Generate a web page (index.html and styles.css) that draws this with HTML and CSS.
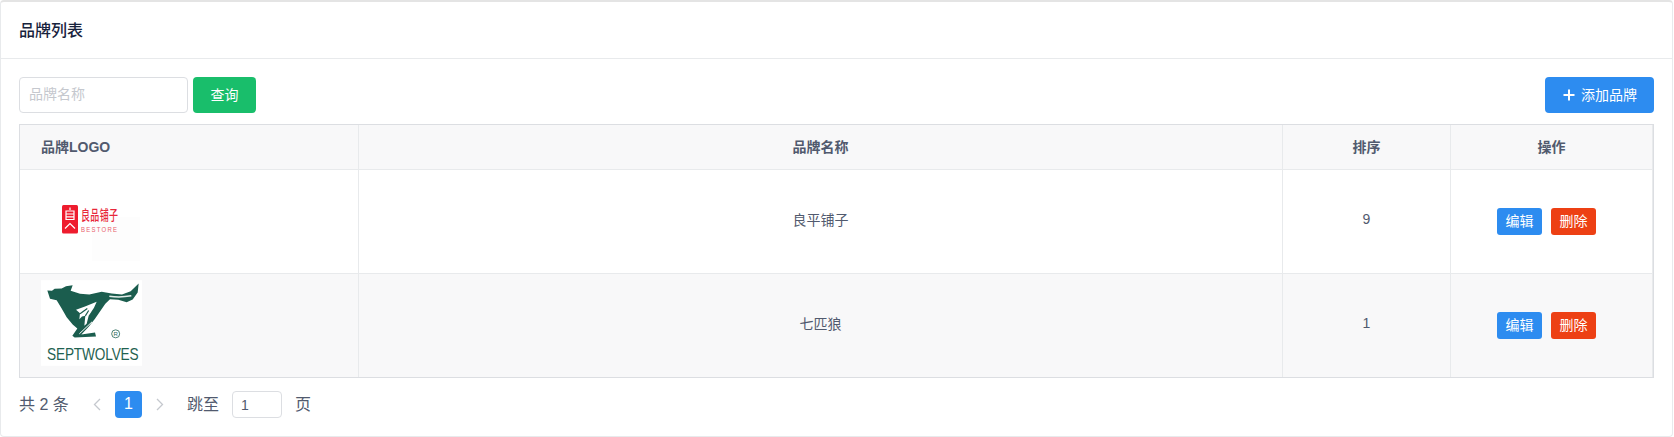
FILE: index.html
```html
<!DOCTYPE html>
<html lang="zh">
<head>
<meta charset="utf-8">
<title>品牌列表</title>
<link rel="stylesheet" href="styles.css">
</head>
<body>
<div class="card">
  <div class="card-head">品牌列表</div>
  <div class="card-body">
    <div class="toolbar">
      <div class="search">
        <input class="search-input" type="text" placeholder="品牌名称">
        <button class="btn btn-green btn-query">查询</button>
      </div>
      <button class="btn btn-blue btn-add">
        <svg class="plus" width="12" height="12" viewBox="0 0 12 12"><path d="M6 0.5V11.5M0.5 6H11.5" stroke="#fff" stroke-width="2" fill="none"/></svg>
        <span>添加品牌</span>
      </button>
    </div>
    <div class="table-wrap">
      <table class="table">
        <colgroup><col class="c1"><col class="c2"><col class="c3"><col class="c4"></colgroup>
        <thead>
          <tr><th class="left">品牌LOGO</th><th>品牌名称</th><th>排序</th><th>操作</th></tr>
        </thead>
        <tbody>
          <tr>
            <td class="left logo-cell">
              <svg class="logo" width="101" height="86" viewBox="0 0 101 86">
                <rect x="51" y="38" width="48" height="44" fill="#fdfdfd"/>
                <rect x="21" y="26" width="16" height="28.500" rx="1.500" fill="#ee1c2e"/>
                <path d="M29 28.500V31M25 32H33V40.500H25ZM25 35H33M25 37.800H33M24 49.500L29 44.500L34 49.500" stroke="#fff" stroke-width="1.200" fill="none"/>
                <text transform="translate(40 41) scale(1 1.500)" class="logo-cn" textLength="37">良品铺子</text>
                <text transform="translate(40 52.500) scale(1 1.300)" class="logo-en" textLength="36">BESTORE</text>
              </svg>
            </td>
            <td class="txt">良平铺子</td>
            <td class="txt">9</td>
            <td><div class="ops"><button class="btn-sm btn-blue">编辑</button><button class="btn-sm btn-red">删除</button></div></td>
          </tr>
          <tr class="stripe">
            <td class="left logo-cell wolf-cell">
              <svg class="logo" width="101" height="86" viewBox="33 15 303 257">
                <rect x="33" y="15" width="303" height="257" fill="#fff"/>
                <path class="wolf" d="M52 46L66 47L74 41L95 40L108 33L128 30L122 47L150 56L178 58L215 50L245 55L276 58L302 48L326 25L323 52L308 73L290 81L265 74L240 72L226 86L212 106L195 131L176 155L154 178L195 172L198 184L134 187L127 182L142 160L128 148L110 126L95 100L80 75L60 71Z"/>
                <path d="M238 63Q268 68 304 62" stroke="#e4eeea" stroke-width="4.500" fill="none"/>
                <path fill="#fff" d="M138 104L165 94L200 80L192 98L176 122L170 146L163 152L166 122L156 124L148 132L150 114Z"/>
                <path d="M150 116L172 100M166 122L176 106" stroke="#1b5d4e" stroke-width="3.500" fill="none"/>
                <path d="M148 176L186 140" stroke="#fff" stroke-width="3" fill="none"/>
                <circle cx="257" cy="176" r="12" fill="none" stroke="#2a6a5a" stroke-width="2.500"/>
                <text x="250.500" y="183" class="wolf-r">R</text>
                <text transform="translate(51 255) scale(1 1.270)" class="wolf-name" textLength="275">SEPTWOLVES</text>
              </svg>
            </td>
            <td class="txt">七匹狼</td>
            <td class="txt">1</td>
            <td><div class="ops"><button class="btn-sm btn-blue">编辑</button><button class="btn-sm btn-red">删除</button></div></td>
          </tr>
        </tbody>
      </table>
    </div>
    <div class="pager">
      <span class="total">共 2 条</span>
      <svg class="chev chev-prev" width="8" height="13" viewBox="0 0 8 13"><path d="M7 1L1.500 6.500L7 12" stroke="#c5c8ce" stroke-width="1.300" fill="none"/></svg>
      <span class="page-cur">1</span>
      <svg class="chev chev-next" width="8" height="13" viewBox="0 0 8 13"><path d="M1 1L6.500 6.500L1 12" stroke="#c5c8ce" stroke-width="1.300" fill="none"/></svg>
      <span class="jump">跳至</span>
      <input class="jump-input" type="text" value="1">
      <span class="jump-unit">页</span>
    </div>
  </div>
</div>
</body>
</html>
```

FILE: styles.css
```css
* { box-sizing: border-box; }
html, body { margin: 0; padding: 0; height: 437px; overflow: hidden; background: #fff; }
body { font-family: "Liberation Sans", "Noto Sans CJK SC", sans-serif; font-size: 14px; color: #515a6e; }

.card {
  width: 1673px;
  height: 437px;
  border: 1px solid #e8eaec;
  border-top: 2px solid #e4e4e4;
  border-radius: 4px;
  background: #fff;
}
.card-head {
  height: 57px;
  padding: 0 0 3px 18px;
  display: flex;
  align-items: center;
  font-size: 16px;
  font-weight: 500;
  color: #17233d;
  border-bottom: 1px solid #e8eaec;
}
.card-body { padding: 18px 18px 0; }

.toolbar { display: flex; justify-content: space-between; height: 36px; width: 1635px; }
.search { display: flex; gap: 5px; }
.search-input {
  width: 169px;
  height: 36px;
  padding: 0 9px 2px;
  border: 1px solid #dcdee2;
  border-radius: 4px;
  font: inherit;
  color: #515a6e;
  outline: none;
}
.search-input::placeholder { color: #c5c8ce; opacity: 1; }

.btn {
  height: 36px;
  border: 0;
  border-radius: 4px;
  color: #fff;
  font: inherit;
  padding: 0 0 3px;
}
.btn-green { background: #19be6b; }
.btn-blue { background: #2d8cf0; }
.btn-red { background: #ed4014; }
.btn-query { width: 63px; }
.btn-add {
  width: 109px;
  display: flex;
  align-items: center;
  gap: 6px;
  padding: 0 0 0 18px;
}
.btn-add span { padding-bottom: 3px; }

.table-wrap {
  width: 1635px;
  margin-top: 11px;
  border: 1px solid #dcdee2;
}
.table { width: 1633px; table-layout: fixed; border-collapse: separate; border-spacing: 0; }
.c1 { width: 339px; }
.c2 { width: 924px; }
.c3 { width: 168px; }
.c4 { width: 202px; }
.table th, .table td {
  text-align: center;
  padding: 0;
  border-right: 1px solid #e8eaec;
  border-bottom: 1px solid #e8eaec;
}
.table tbody tr:last-child td { border-bottom: 0; }
.table th { height: 45px; padding-bottom: 3px; background: #f8f8f9; font-weight: 700; font-size: 14px; }
.table td { height: 104px; }
.table td.txt { padding-bottom: 5px; }
.table .stripe td { background: #f8f8f9; height: 103px; }
.table th.left, .table td.left { text-align: left; padding-left: 21px; }
.table td.wolf-cell { padding-bottom: 5px; }
.logo { display: block; }
.logo-cn { font-family: "Noto Sans CJK SC", sans-serif; font-size: 9px; font-weight: 500; fill: #e8273a; }
.logo-en { font-family: "Liberation Sans", sans-serif; font-size: 6px; fill: #e8606c; }
.wolf { fill: #1b5d4e; }
.wolf-r { font-family: "Liberation Sans", sans-serif; font-size: 18px; fill: #2a6a5a; }
.wolf-name { font-family: "Liberation Sans", sans-serif; font-size: 41px; fill: #1f6251; }

.ops { display: flex; justify-content: center; gap: 9px; padding-right: 10px; }
.btn-sm {
  width: 45px;
  height: 27px;
  padding: 0 0 3px;
  border: 0;
  border-radius: 3px;
  color: #fff;
  font: inherit;
}

.pager { display: flex; align-items: center; height: 27px; margin-top: 13px; font-size: 16px; width: 1635px; }
.total { width: 50px; white-space: pre; padding-bottom: 4px; }
.chev-prev { margin-left: 24px; }
.page-cur {
  width: 27px;
  height: 27px;
  margin-left: 14px;
  border-radius: 4px;
  background: #2d8cf0;
  color: #fff;
  text-align: center;
  line-height: 26px;
  font-size: 16px;
  font-weight: 500;
}
.chev-next { margin-left: 14px; }
.jump { margin-left: 23px; padding-bottom: 3px; }
.jump-input {
  width: 50px;
  height: 27px;
  margin-left: 13px;
  padding: 0 8px;
  border: 1px solid #dcdee2;
  border-radius: 4px;
  font: inherit;
  font-size: 14px;
  color: #515a6e;
  outline: none;
}
.jump-unit { margin-left: 13px; padding-bottom: 3px; }
```
